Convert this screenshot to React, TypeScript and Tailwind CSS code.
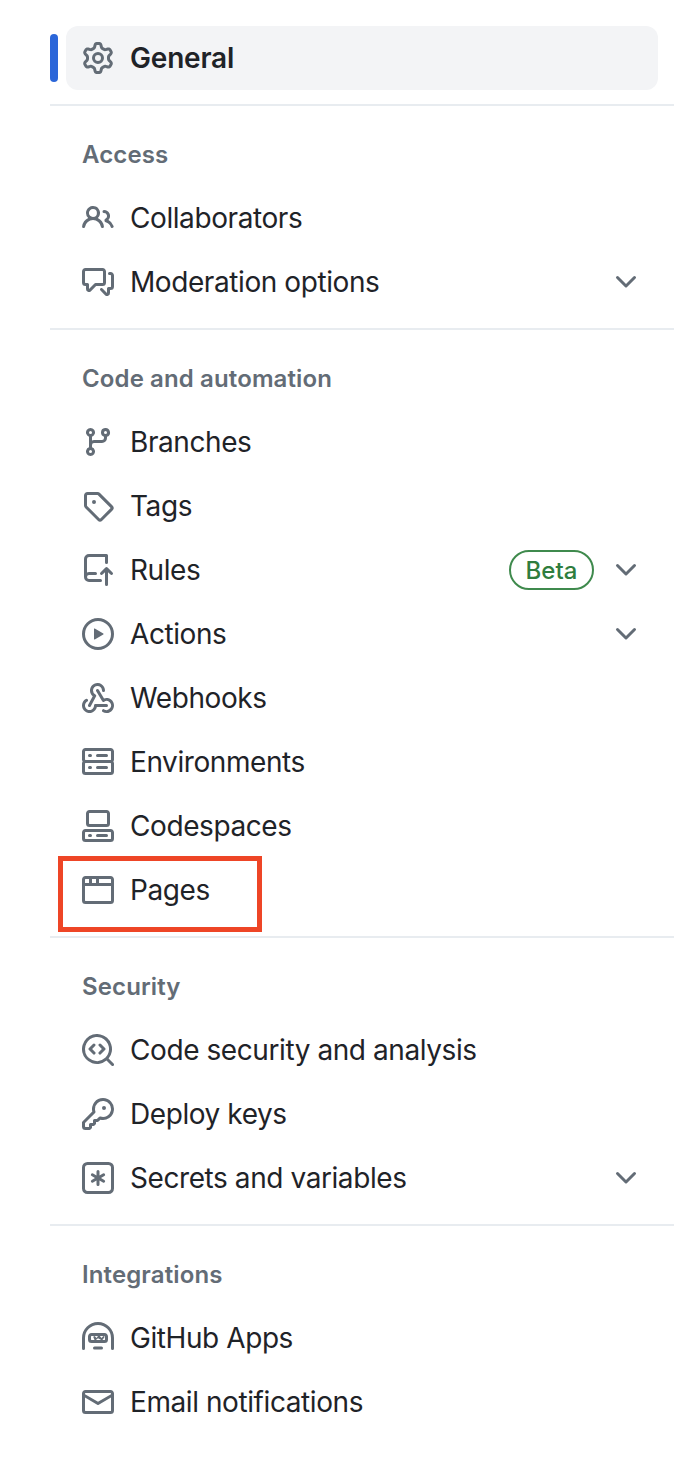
const paths = {
  gear: "M8 0a8.2 8.2 0 0 1 .701.031C9.444.095 9.99.645 10.16 1.29l.288 1.107c.018.066.079.158.212.224.231.114.454.243.668.386.123.082.233.09.299.071l1.103-.303c.644-.176 1.392.021 1.82.63.27.385.506.792.704 1.218.315.675.111 1.422-.364 1.891l-.814.806c-.049.048-.098.147-.088.294.016.257.016.515 0 .772-.01.147.038.246.088.294l.814.806c.475.469.679 1.216.364 1.891a7.977 7.977 0 0 1-.704 1.217c-.428.61-1.176.807-1.82.63l-1.102-.302c-.067-.019-.177-.011-.3.071a5.909 5.909 0 0 1-.668.386c-.133.066-.194.158-.211.224l-.29 1.106c-.168.646-.715 1.196-1.458 1.26a8.006 8.006 0 0 1-1.402 0c-.743-.064-1.289-.614-1.458-1.26l-.289-1.106c-.018-.066-.079-.158-.212-.224a5.738 5.738 0 0 1-.668-.386c-.123-.082-.233-.09-.299-.071l-1.103.303c-.644.176-1.392-.021-1.82-.63a8.12 8.12 0 0 1-.704-1.218c-.315-.675-.111-1.422.363-1.891l.815-.806c.05-.048.098-.147.088-.294a6.214 6.214 0 0 1 0-.772c.01-.147-.038-.246-.088-.294l-.815-.806C.635 6.045.431 5.298.746 4.623a7.92 7.92 0 0 1 .704-1.217c.428-.61 1.176-.807 1.82-.63l1.102.302c.067.019.177.011.3-.071.214-.143.437-.272.668-.386.133-.066.194-.158.211-.224l.29-1.106C6.009.645 6.556.095 7.299.03 7.53.01 7.764 0 8 0Zm-.571 1.525c-.036.003-.108.036-.137.146l-.289 1.105c-.147.561-.549.967-.998 1.189-.173.086-.34.183-.5.29-.417.278-.97.423-1.529.27l-1.103-.303c-.109-.03-.175.016-.195.045-.22.312-.412.644-.573.99-.014.031-.021.11.059.19l.815.806c.411.406.562.957.53 1.456a4.709 4.709 0 0 0 0 .582c.032.499-.119 1.05-.53 1.456l-.815.806c-.081.08-.073.159-.059.19.162.346.353.677.573.989.02.03.085.076.195.046l1.102-.303c.56-.153 1.113-.008 1.53.27.161.107.328.204.501.29.447.222.85.629.997 1.189l.289 1.105c.029.109.101.143.137.146a6.6 6.6 0 0 0 1.142 0c.036-.003.108-.036.137-.146l.289-1.105c.147-.561.549-.967.998-1.189.173-.086.34-.183.5-.29.417-.278.97-.423 1.529-.27l1.103.303c.109.029.175-.016.195-.045.22-.313.411-.644.573-.99.014-.031.021-.11-.059-.19l-.815-.806c-.411-.406-.562-.957-.53-1.456a4.709 4.709 0 0 0 0-.582c-.032-.499.119-1.05.53-1.456l.815-.806c.081-.08.073-.159.059-.19a6.464 6.464 0 0 0-.573-.989c-.02-.03-.085-.076-.195-.046l-1.102.303c-.56.153-1.113.008-1.53-.27a4.44 4.44 0 0 0-.501-.29c-.447-.222-.85-.629-.997-1.189l-.289-1.105c-.029-.11-.101-.143-.137-.146a6.6 6.6 0 0 0-1.142 0ZM11 8a3 3 0 1 1-6 0 3 3 0 0 1 6 0ZM9.5 8a1.5 1.5 0 1 0-3.001.001A1.5 1.5 0 0 0 9.5 8Z",
  people: "M2 5.5a3.5 3.5 0 1 1 5.898 2.549 5.508 5.508 0 0 1 3.034 4.084.75.75 0 1 1-1.482.235 4 4 0 0 0-7.9 0 .75.75 0 0 1-1.482-.236A5.507 5.507 0 0 1 3.102 8.05 3.493 3.493 0 0 1 2 5.5ZM11 4a3.001 3.001 0 0 1 2.22 5.018 5.01 5.01 0 0 1 2.56 3.012.749.749 0 0 1-.885.954.752.752 0 0 1-.549-.514 3.507 3.507 0 0 0-2.522-2.372.75.75 0 0 1-.574-.73v-.352a.75.75 0 0 1 .416-.672A1.5 1.5 0 0 0 11 5.5.75.75 0 0 1 11 4Zm-5.5-.5a2 2 0 1 0-.001 3.999A2 2 0 0 0 5.5 3.5Z",
  comments: "M1.75 1h8.5c.966 0 1.75.784 1.75 1.75v5.5A1.75 1.75 0 0 1 10.25 10H7.061l-2.574 2.573A1.458 1.458 0 0 1 2 11.543V10h-.25A1.75 1.75 0 0 1 0 8.25v-5.5C0 1.784.784 1 1.75 1ZM1.5 2.75v5.5c0 .138.112.25.25.25h1a.75.75 0 0 1 .75.75v2.19l2.72-2.72a.749.749 0 0 1 .53-.22h3.5a.25.25 0 0 0 .25-.25v-5.5a.25.25 0 0 0-.25-.25h-8.5a.25.25 0 0 0-.25.25Zm13 2a.25.25 0 0 0-.25-.25h-.5a.75.75 0 0 1 0-1.5h.5c.966 0 1.75.784 1.75 1.75v5.5A1.75 1.75 0 0 1 14.25 12H14v1.543a1.458 1.458 0 0 1-2.487 1.03L9.22 12.28a.749.749 0 0 1 .326-1.275.749.749 0 0 1 .734.215l2.22 2.22v-2.19a.75.75 0 0 1 .75-.75h1a.25.25 0 0 0 .25-.25Z",
  branch: "M9.5 3.25a2.25 2.25 0 1 1 3 2.122V6A2.5 2.5 0 0 1 10 8.5H6a1 1 0 0 0-1 1v1.128a2.251 2.251 0 1 1-1.5 0V5.372a2.25 2.25 0 1 1 1.5 0v1.836A2.493 2.493 0 0 1 6 7h4a1 1 0 0 0 1-1v-.628A2.25 2.25 0 0 1 9.5 3.25Zm-6 0a.75.75 0 1 0 1.5 0 .75.75 0 0 0-1.5 0Zm8.25-.75a.75.75 0 1 0 0 1.5.75.75 0 0 0 0-1.5ZM4.25 12a.75.75 0 1 0 0 1.5.75.75 0 0 0 0-1.5Z",
  tag: "M1 7.775V2.75C1 1.784 1.784 1 2.75 1h5.025c.464 0 .91.184 1.238.513l6.25 6.25a1.75 1.75 0 0 1 0 2.474l-5.026 5.026a1.75 1.75 0 0 1-2.474 0l-6.25-6.25A1.752 1.752 0 0 1 1 7.775Zm1.5 0c0 .066.026.13.073.177l6.25 6.25a.25.25 0 0 0 .354 0l5.025-5.025a.25.25 0 0 0 0-.354l-6.25-6.25a.25.25 0 0 0-.177-.073H2.75a.25.25 0 0 0-.25.25ZM6 5a1 1 0 1 1 0 2 1 1 0 0 1 0-2Z",
  repoPush: "M1 2.5A2.5 2.5 0 0 1 3.5 0h8.75a.75.75 0 0 1 .75.75v3.5a.75.75 0 0 1-1.5 0V1.5h-8a1 1 0 0 0-1 1v6.708A2.492 2.492 0 0 1 3.5 9h3.25a.75.75 0 0 1 0 1.5H3.5a1 1 0 0 0 0 2h5.75a.75.75 0 0 1 0 1.5H3.5A2.5 2.5 0 0 1 1 11.5Zm13.23 7.79h-.001l-1.224-1.224v6.184a.75.75 0 0 1-1.5 0V9.066L10.28 10.29a.75.75 0 0 1-1.06-1.06l2.505-2.504a.75.75 0 0 1 1.06 0L15.29 9.23a.75.75 0 0 1-1.06 1.06Z",
  play: "M8 0a8 8 0 1 1 0 16A8 8 0 0 1 8 0ZM1.5 8a6.5 6.5 0 1 0 13 0 6.5 6.5 0 0 0-13 0Zm4.879-2.773 4.264 2.559a.25.25 0 0 1 0 .428l-4.264 2.559A.25.25 0 0 1 6 10.559V5.442a.25.25 0 0 1 .379-.215Z",
  webhook: "M5.5 4.25a2.25 2.25 0 0 1 4.5 0 .75.75 0 0 0 1.5 0 3.75 3.75 0 1 0-6.14 2.889l-2.272 4.258a.75.75 0 0 0 1.324.706L7 7.25a.75.75 0 0 0-.309-1.015A2.25 2.25 0 0 1 5.5 4.25ZM7.364 3.607a.75.75 0 0 1 1.03.257l2.608 4.349a3.75 3.75 0 1 1-.628 6.785.75.75 0 0 1 .752-1.299 2.25 2.25 0 1 0-.033-3.88.75.75 0 0 1-1.03-.256L7.107 4.636a.75.75 0 0 1 .257-1.03ZM2.9 8.776A.75.75 0 0 1 2.625 9.8 2.25 2.25 0 1 0 6 11.75a.75.75 0 0 1 .75-.751h5.5a.75.75 0 0 1 0 1.5H7.425a3.751 3.751 0 1 1-5.55-3.998.75.75 0 0 1 1.024.274Z",
  server: "M1.75 1h12.5c.966 0 1.75.784 1.75 1.75v4c0 .372-.116.717-.314 1 .198.283.314.628.314 1v4a1.75 1.75 0 0 1-1.75 1.75H1.75A1.75 1.75 0 0 1 0 12.75v-4c0-.358.109-.707.314-1a1.739 1.739 0 0 1-.314-1v-4C0 1.784.784 1 1.75 1ZM1.5 2.75v4c0 .138.112.25.25.25h12.5a.25.25 0 0 0 .25-.25v-4a.25.25 0 0 0-.25-.25H1.75a.25.25 0 0 0-.25.25Zm.25 5.75a.25.25 0 0 0-.25.25v4c0 .138.112.25.25.25h12.5a.25.25 0 0 0 .25-.25v-4a.25.25 0 0 0-.25-.25ZM7 4.75A.75.75 0 0 1 7.75 4h4.5a.75.75 0 0 1 0 1.5h-4.5A.75.75 0 0 1 7 4.75ZM7.75 10h4.5a.75.75 0 0 1 0 1.5h-4.5a.75.75 0 0 1 0-1.5ZM3 4.75A.75.75 0 0 1 3.75 4h.5a.75.75 0 0 1 0 1.5h-.5A.75.75 0 0 1 3 4.75ZM3.75 10h.5a.75.75 0 0 1 0 1.5h-.5a.75.75 0 0 1 0-1.5Z",
  codespaces: "M0 11.25c0-.966.784-1.75 1.75-1.75h12.5c.966 0 1.75.784 1.75 1.75v3A1.75 1.75 0 0 1 14.25 16H1.75A1.75 1.75 0 0 1 0 14.25Zm2-9.5C2 .784 2.784 0 3.75 0h8.5C13.216 0 14 .784 14 1.75v5a1.75 1.75 0 0 1-1.75 1.75h-8.5A1.75 1.75 0 0 1 2 6.75Zm1.75-.25a.25.25 0 0 0-.25.25v5c0 .138.112.25.25.25h8.5a.25.25 0 0 0 .25-.25v-5a.25.25 0 0 0-.25-.25Zm-2 9.5a.25.25 0 0 0-.25.25v3c0 .138.112.25.25.25h12.5a.25.25 0 0 0 .25-.25v-3a.25.25 0 0 0-.25-.25ZM7 12.75a.75.75 0 0 1 .75-.75h4.5a.75.75 0 0 1 0 1.5h-4.5a.75.75 0 0 1-.75-.75Zm-4 0a.75.75 0 0 1 .75-.75h.5a.75.75 0 0 1 0 1.5h-.5a.75.75 0 0 1-.75-.75Z",
  browser: "M0 2.75C0 1.784.784 1 1.75 1h12.5c.966 0 1.75.784 1.75 1.75v10.5A1.75 1.75 0 0 1 14.25 15H1.75A1.75 1.75 0 0 1 0 13.25ZM14.5 6h-13v7.25c0 .138.112.25.25.25h12.5a.25.25 0 0 0 .25-.25Zm-6-3.5v2h6V2.75a.25.25 0 0 0-.25-.25ZM5 2.5v2h2v-2Zm-3.25 0a.25.25 0 0 0-.25.25V4.5h2v-2Z",
  codescan: "M8.47 4.97a.75.75 0 0 0 0 1.06L9.94 7.5 8.47 8.97a.75.75 0 1 0 1.06 1.06l2-2a.75.75 0 0 0 0-1.06l-2-2a.75.75 0 0 0-1.06 0ZM6.53 6.03a.75.75 0 0 0-1.06-1.06l-2 2a.75.75 0 0 0 0 1.06l2 2a.75.75 0 1 0 1.06-1.06L5.06 7.5l1.47-1.47ZM12.246 13.307a7.501 7.501 0 1 1 1.06-1.06l2.474 2.473a.749.749 0 0 1-.326 1.275.749.749 0 0 1-.734-.215ZM1.5 7.5a6.002 6.002 0 0 0 3.608 5.504 6.002 6.002 0 0 0 6.486-1.117.748.748 0 0 1 .292-.293A6 6 0 1 0 1.5 7.5Z",
  key: "M10.5 0a5.499 5.499 0 1 1-1.288 10.848l-.932.932a.749.749 0 0 1-.53.22H7v.75a.749.749 0 0 1-.22.53l-.5.5a.749.749 0 0 1-.53.22H5v.75a.749.749 0 0 1-.22.53l-.5.5a.749.749 0 0 1-.53.22h-2A1.75 1.75 0 0 1 0 14.25v-2c0-.199.079-.389.22-.53l4.932-4.932A5.5 5.5 0 0 1 10.5 0Zm-4 5.5c-.001.431.069.86.205 1.269a.75.75 0 0 1-.181.768L1.5 12.56v1.69c0 .138.112.25.25.25h1.69l.06-.06v-1.19a.75.75 0 0 1 .75-.75h1.19l.06-.06v-1.19a.75.75 0 0 1 .75-.75h1.19l1.023-1.025a.75.75 0 0 1 .768-.18A4 4 0 1 0 6.5 5.5ZM11 6a1 1 0 1 1 0-2 1 1 0 0 1 0 2Z",
  keyAsterisk: "M0 2.75A2.75 2.75 0 0 1 2.75 0h10.5A2.75 2.75 0 0 1 16 2.75v10.5A2.75 2.75 0 0 1 13.25 16H2.75A2.75 2.75 0 0 1 0 13.25ZM2.75 1.5c-.69 0-1.25.56-1.25 1.25v10.5c0 .69.56 1.25 1.25 1.25h10.5c.69 0 1.25-.56 1.25-1.25V2.75c0-.69-.56-1.25-1.25-1.25ZM8 4a.75.75 0 0 1 .75.75V6.7l1.69-.975a.75.75 0 0 1 .75 1.3L9.5 8l1.69.975a.75.75 0 0 1-.75 1.3L8.75 9.3v1.95a.75.75 0 0 1-1.5 0V9.3l-1.69.975a.75.75 0 0 1-.75-1.3L6.5 8l-1.69-.975a.75.75 0 0 1 .75-1.3L7.25 6.7V4.75A.75.75 0 0 1 8 4Z",
  hubot: "M0 8a8 8 0 0 1 16 0v5.25a.75.75 0 0 1-1.5 0V8a6.5 6.5 0 1 0-13 0v5.25a.75.75 0 0 1-1.5 0ZM3 7.25C3 6.284 3.784 5.5 4.75 5.5h6.5c.966 0 1.75.784 1.75 1.75v1.5a1.75 1.75 0 0 1-1.75 1.75h-6.5A1.75 1.75 0 0 1 3 8.75Zm1.75-.25a.25.25 0 0 0-.25.25v1.5c0 .138.112.25.25.25h6.5a.25.25 0 0 0 .25-.25v-1.5a.25.25 0 0 0-.25-.25ZM5.6 7.4l.75-.4.9 1 .75-1h.9l-.75 0 .75 0 .9 1 .85-1 .75.4-1.1 1.5a.6.6 0 0 1-.9 0L8 8.1l-.9.8a.6.6 0 0 1-.9 0ZM6.25 12.25h3.5a.75.75 0 0 1 0 1.5h-3.5a.75.75 0 0 1 0-1.5Z",
  mail: "M1.75 2h12.5c.966 0 1.75.784 1.75 1.75v8.5A1.75 1.75 0 0 1 14.25 14H1.75A1.75 1.75 0 0 1 0 12.25v-8.5C0 2.784.784 2 1.75 2ZM1.5 12.251c0 .138.112.25.25.25h12.5a.25.25 0 0 0 .25-.25V5.809L8.38 9.397a.75.75 0 0 1-.76 0L1.5 5.809v6.442Zm13-8.181v-.32a.25.25 0 0 0-.25-.25H1.75a.25.25 0 0 0-.25.25v.32L8 7.88Z",
  chevron: "M12.78 5.22a.749.749 0 0 1 0 1.06l-4.25 4.25a.749.749 0 0 1-1.06 0L3.22 6.28a.749.749 0 1 1 1.06-1.06L8 8.939l3.72-3.719a.749.749 0 0 1 1.06 0Z",
};

function Octicon({ name, className }: { name: keyof typeof paths; className?: string }) {
  return (
    <svg viewBox="0 0 16 16" fill="currentColor" className={`w-8 h-8 shrink-0 text-[#636c76] ${className ?? ""}`}>
      <path d={paths[name]} />
    </svg>
  );
}

type Item = {
  icon: keyof typeof paths;
  label: string;
  chevron?: boolean;
  beta?: boolean;
  marked?: boolean;
};

const sections: { title: string; items: Item[] }[] = [
  {
    title: "Access",
    items: [
      { icon: "people", label: "Collaborators" },
      { icon: "comments", label: "Moderation options", chevron: true },
    ],
  },
  {
    title: "Code and automation",
    items: [
      { icon: "branch", label: "Branches" },
      { icon: "tag", label: "Tags" },
      { icon: "repoPush", label: "Rules", chevron: true, beta: true },
      { icon: "play", label: "Actions", chevron: true },
      { icon: "webhook", label: "Webhooks" },
      { icon: "server", label: "Environments" },
      { icon: "codespaces", label: "Codespaces" },
      { icon: "browser", label: "Pages", marked: true },
    ],
  },
  {
    title: "Security",
    items: [
      { icon: "codescan", label: "Code security and analysis" },
      { icon: "key", label: "Deploy keys" },
      { icon: "keyAsterisk", label: "Secrets and variables", chevron: true },
    ],
  },
  {
    title: "Integrations",
    items: [
      { icon: "hubot", label: "GitHub Apps" },
      { icon: "mail", label: "Email notifications" },
    ],
  },
];

function Row({ item }: { item: Item }) {
  return (
    <div className="relative flex items-center h-16 ml-4 mr-4 pl-4 pr-4">
      {item.marked && (
        <div className="absolute -left-2 top-[-2px] w-[204px] h-[76px] border-[5px] border-[#ee4526]" />
      )}
      <Octicon name={item.icon} />
      <span className="ml-4 text-[28px] leading-none tracking-[-0.42px] text-[#1f2328]">{item.label}</span>
      {item.beta && (
        <span className="ml-auto mr-4 flex items-center justify-center w-[85px] h-10 pt-px rounded-full border-2 border-[#3f8a4d] text-2xl font-medium text-[#2f7d3e]">
          Beta
        </span>
      )}
      {item.chevron && <Octicon name="chevron" className={item.beta ? "" : "ml-auto"} />}
    </div>
  );
}

export default function App() {
  return (
    <div className="w-[690px] h-[1476px] bg-white pt-[26px] pl-[50px] pr-4 font-['Inter',sans-serif]">
      <div className="relative flex items-center h-16 ml-4 mr-4 pl-4 rounded-xl bg-[#f3f4f6]">
        <div className="absolute left-[-16px] top-2 w-2 h-12 rounded-md bg-[#2b66d9]" />
        <Octicon name="gear" />
        <span className="ml-4 text-[28px] leading-none tracking-[-0.2px] font-semibold text-[#1f2328]">General</span>
      </div>

      {sections.map((section) => (
        <div key={section.title} className="mt-[14px] border-t-2 border-[#e8ecf0]">
          <div className="pt-[33px] pb-[15px] pl-8 h-20 text-2xl leading-8 tracking-[0.12px] font-semibold text-[#636c76]">
            {section.title}
          </div>
          {section.items.map((item) => (
            <Row key={item.label} item={item} />
          ))}
        </div>
      ))}
    </div>
  );
}
